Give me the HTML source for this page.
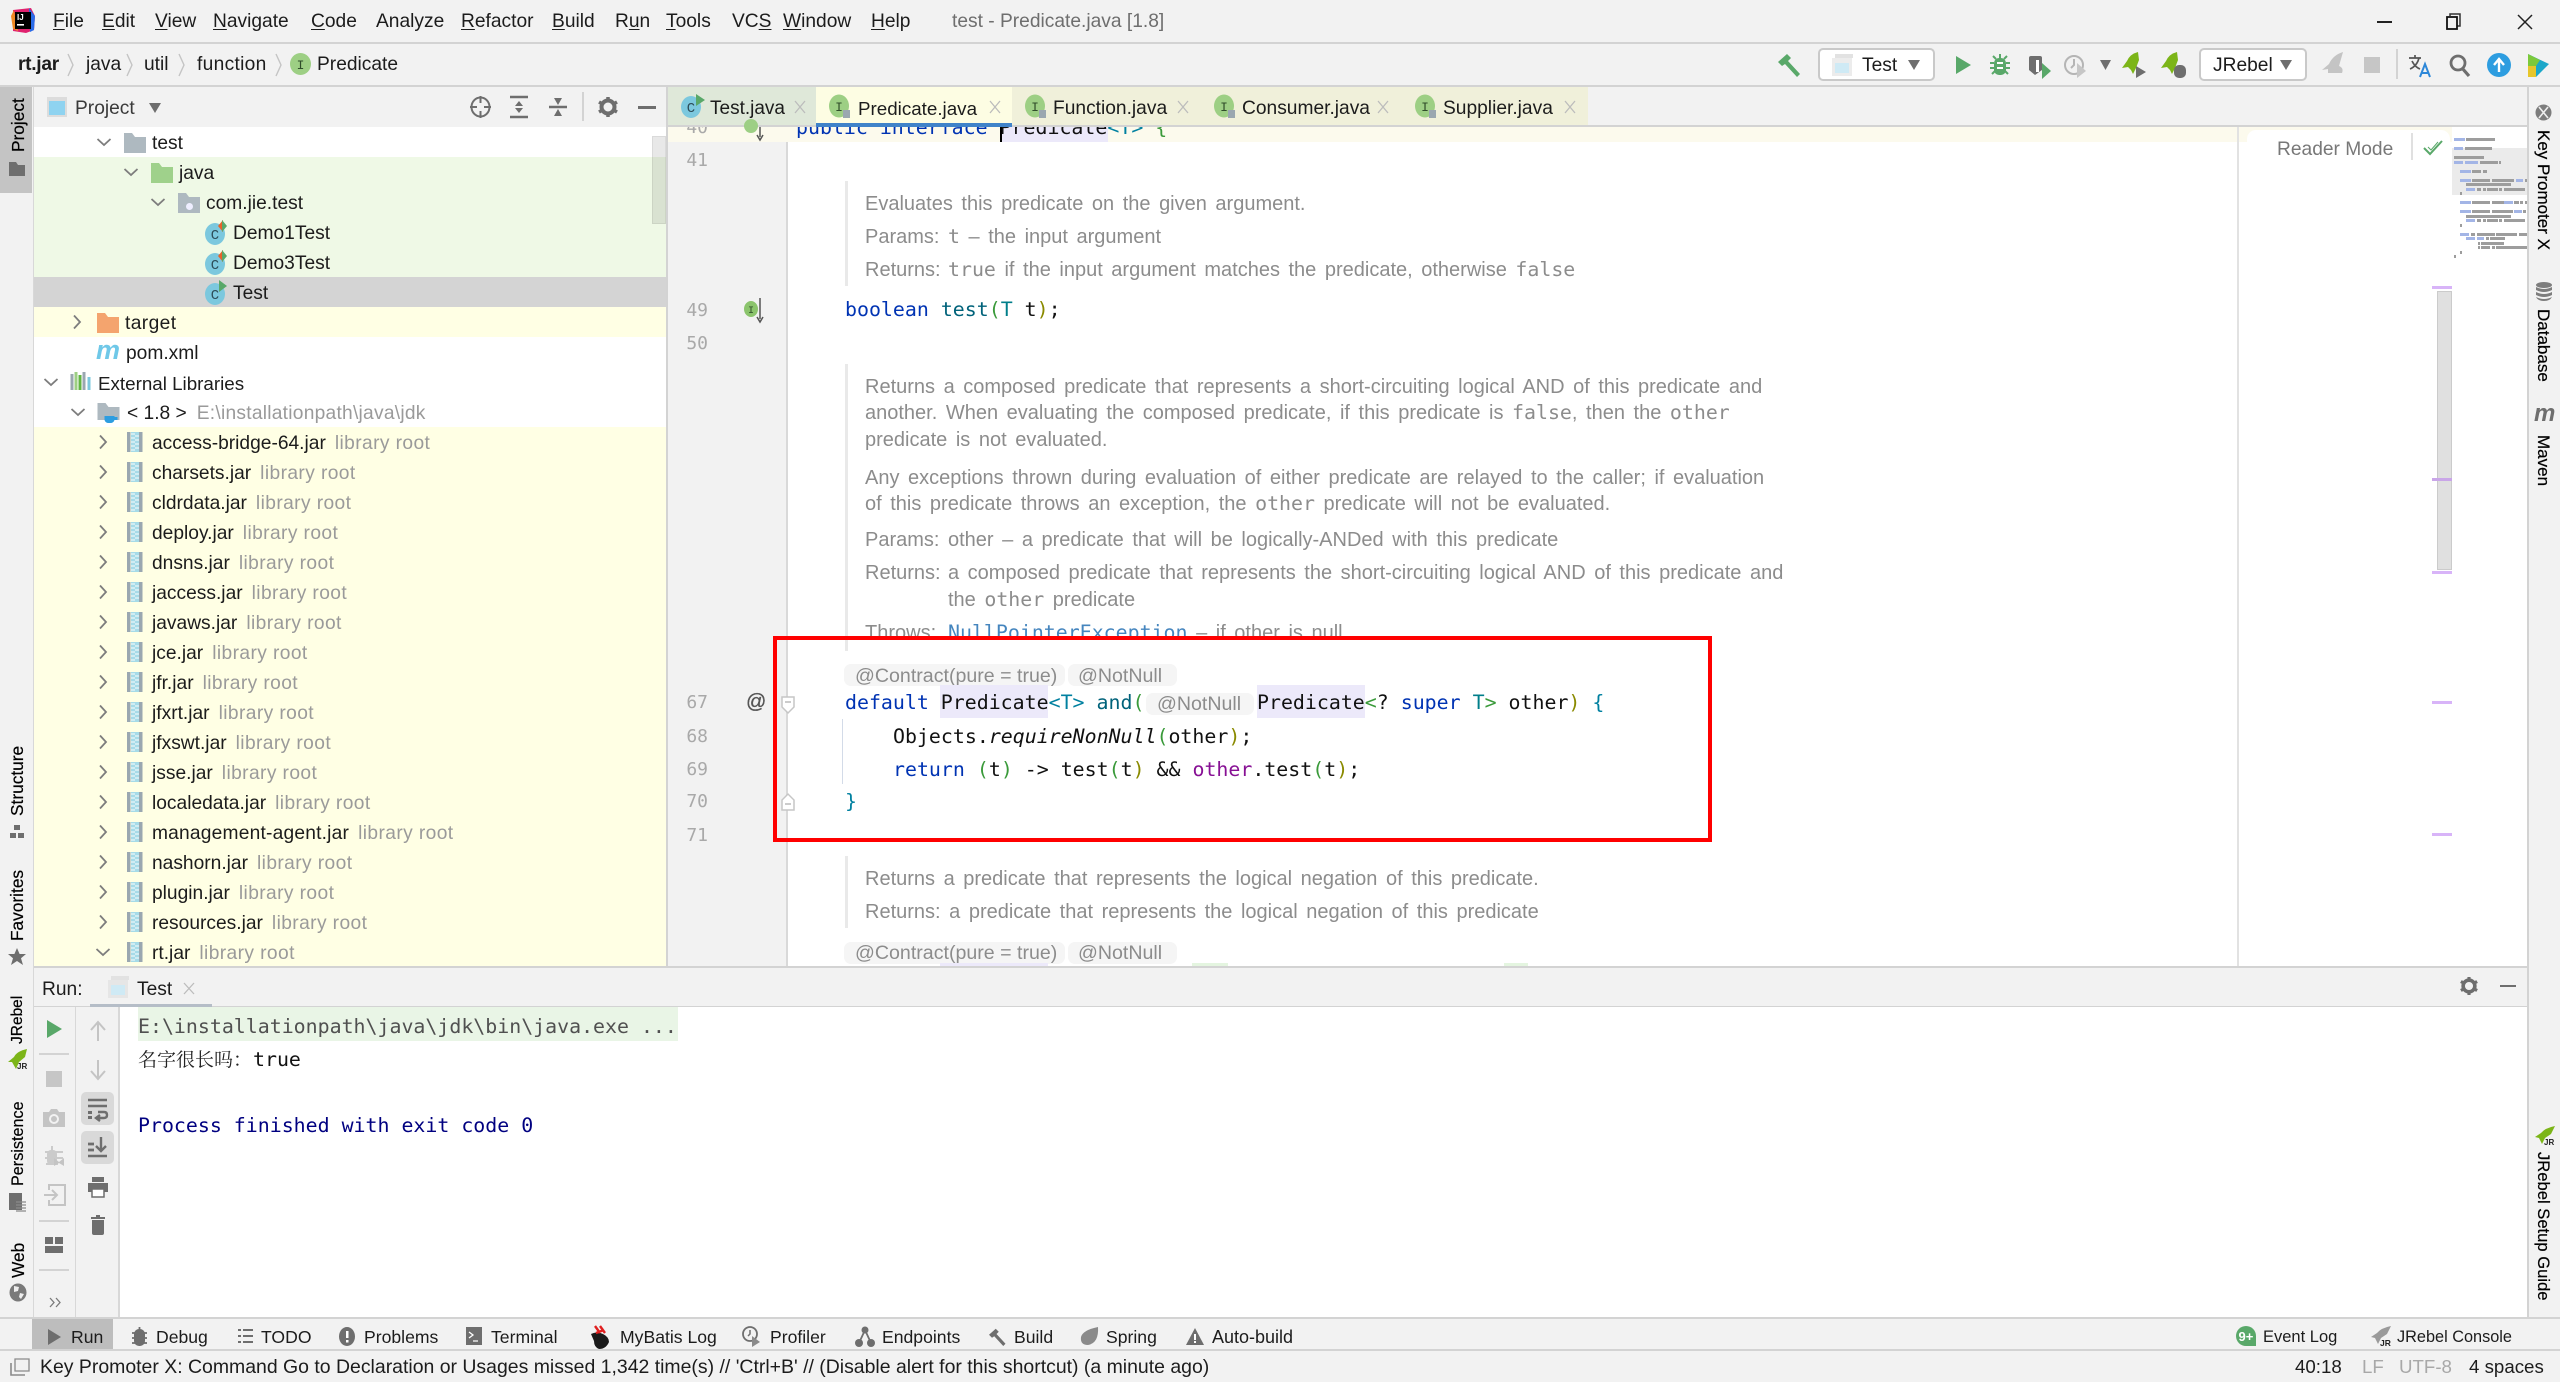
<!DOCTYPE html>
<html lang="en"><head><meta charset="utf-8"><title>test - Predicate.java [1.8]</title>
<style>
html,body{margin:0;padding:0}
body{position:relative;width:2560px;height:1380px;overflow:hidden;background:#f2f2f2;font-family:"Liberation Sans","Noto Sans CJK SC",sans-serif;color:#1c1c1c}
div,span,svg{position:absolute}
i,b,u,em{position:static}
.t{white-space:nowrap;font-size:19.2px;line-height:30px;height:30px}
.b{font-size:17.6px}
.m u{text-decoration:underline;text-underline-offset:2px}
.box{box-sizing:border-box}
svg{overflow:visible}
.r{left:33px;width:633px;height:30px}
.r svg.c{left:62px;top:7px;width:16px;height:16px}
.r svg.j{left:94px;top:5px;width:16px;height:20px}
.r span{left:119px;top:1.5px;white-space:nowrap;font-size:19.2px;line-height:30px}
.r i{font-style:normal;color:#9a9a9a;margin-left:9px;letter-spacing:.4px}
.mono{font-family:"DejaVu Sans Mono","Liberation Mono",monospace;font-size:19.9px;white-space:pre;line-height:30px;height:30px;color:#111}
.ln{font-family:"DejaVu Sans Mono","Liberation Mono",monospace;font-size:18px;color:#a9a9a9;left:676px;width:32px;text-align:right;line-height:30px;height:30px}
.d{white-space:nowrap;font-size:20px;word-spacing:3px;line-height:30px;height:30px;color:#8c8c8c;margin-top:1.5px}
.a{white-space:nowrap;font-size:19.6px;line-height:30px;height:30px;color:#8c8c8c;margin-top:1.5px}
.d em{font-family:"DejaVu Sans Mono","Liberation Mono",monospace;font-size:19.9px;font-style:normal;color:#8c8c8c;line-height:20px}
.bar{left:845px;width:3px;background:#e9e9e9}
.pill{background:#f5f5f5;border-radius:7px;height:22px}
.kw{color:#0033b3}.fn{color:#00627a}.ty{color:#007e8a}.p1{color:#3a9a3a}.p2{color:#8a8a00}.p3{color:#0080a0}.pu{color:#871094}
.mono span{position:static}
.rl{transform:rotate(-90deg);transform-origin:0 0;white-space:nowrap;font-size:17.3px;line-height:20px;color:#000;-webkit-text-stroke:.2px #000}
.rr{transform:rotate(90deg);transform-origin:0 0;white-space:nowrap;font-size:17px;line-height:20px;color:#000;-webkit-text-stroke:.2px #000}
.sep{background:#d6d6d6}
</style></head>
<body>
<svg width="0" height="0" style="left:0;top:0">
<defs>
<symbol id="cr" viewBox="0 0 16 16"><polyline points="5,1.5 11,8 5,14.5" fill="none" stroke="#7d7d7d" stroke-width="1.8"/></symbol>
<symbol id="cd" viewBox="0 0 16 16"><polyline points="1.5,5 8,11 14.5,5" fill="none" stroke="#7d7d7d" stroke-width="1.8"/></symbol>
<symbol id="jar" viewBox="0 0 16 20"><rect x="0" y="0" width="3.5" height="20" fill="#9aa7b0"/><rect x="12" y="0" width="3.5" height="20" fill="#9aa7b0"/><rect x="4" y="0" width="8" height="20" fill="#a6dbe8"/><path d="M4 2h4M8 4h4M4 6h4M8 8h4M4 10h4M8 12h4M4 14h4M8 16h4M4 18h4" stroke="#eaf6f8" stroke-width="1.2"/></symbol>
<symbol id="fold" viewBox="0 0 22 22"><path d="M0 1h8l3 4h11v16H0z"/></symbol>
<symbol id="ci" viewBox="0 0 22 24"><ellipse cx="10" cy="13" rx="10" ry="11" fill="#7cc8de"/><text x="10" y="18" font-family="Liberation Mono" font-size="14" fill="#2d4c58" text-anchor="middle">C</text></symbol>
<symbol id="ii" viewBox="0 0 22 24"><ellipse cx="10" cy="12" rx="10" ry="11.5" fill="#9dcf84"/><text x="10" y="17" font-family="Liberation Mono" font-size="13" fill="#2f4d2a" text-anchor="middle">I</text><rect x="14" y="16" width="7" height="8" fill="#9aa7b0"/></symbol>
<symbol id="run" viewBox="0 0 16 18"><path d="M0 0L15 9 0 18z" fill="#59a869"/></symbol>
</defs>
</svg>

<!-- title bar -->
<svg style="left:11px;top:8px" width="24" height="25" viewBox="0 0 24 25"><path d="M2 2L20 0l4 8-1 14-8 3-13-2z" fill="#e0216e"/><path d="M18 0l6 8-1 14-4 2z" fill="#2a6ce8"/><path d="M0 8L3 2l4 21-5-2z" fill="#f08a24"/><rect x="4" y="4" width="16" height="17" fill="#000"/><text x="6" y="12" font-size="8" font-weight="bold" font-family="Liberation Sans" fill="#fff">IJ</text><rect x="6" y="16" width="7" height="1.6" fill="#fff"/></svg>
<div class="t m" style="left:53px;top:7px"><u>F</u>ile</div>
<div class="t m" style="left:102px;top:7px"><u>E</u>dit</div>
<div class="t m" style="left:155px;top:7px"><u>V</u>iew</div>
<div class="t m" style="left:213px;top:7px"><u>N</u>avigate</div>
<div class="t m" style="left:311px;top:7px"><u>C</u>ode</div>
<div class="t m" style="left:376px;top:7px">Analyze</div>
<div class="t m" style="left:461px;top:7px"><u>R</u>efactor</div>
<div class="t m" style="left:552px;top:7px"><u>B</u>uild</div>
<div class="t m" style="left:615px;top:7px">R<u>u</u>n</div>
<div class="t m" style="left:666px;top:7px"><u>T</u>ools</div>
<div class="t m" style="left:732px;top:7px">VC<u>S</u></div>
<div class="t m" style="left:783px;top:7px"><u>W</u>indow</div>
<div class="t m" style="left:871px;top:7px"><u>H</u>elp</div>
<div class="t" style="left:952px;top:7px;color:#6e6e6e">test - Predicate.java [1.8]</div>
<div style="left:2377px;top:21px;width:15px;height:2px;background:#222"></div>
<svg style="left:2446px;top:13px" width="16" height="17" viewBox="0 0 16 17"><path d="M4 3V1h10v12h-3" fill="none" stroke="#333" stroke-width="1.5"/><rect x="1" y="4" width="10" height="12" fill="none" stroke="#111" stroke-width="1.8"/></svg>
<svg style="left:2517px;top:14px" width="16" height="16" viewBox="0 0 16 16"><path d="M1 1L15 15M15 1L1 15" stroke="#222" stroke-width="1.5"/></svg>
<div style="left:0;top:42px;width:2560px;height:2px;background:#d3d3d3"></div>

<!-- nav bar -->
<div class="t" style="left:18px;top:50px;font-weight:bold;letter-spacing:-.3px">rt.jar</div>
<div class="t" style="left:86px;top:50px">java</div>
<div class="t" style="left:144px;top:50px">util</div>
<div class="t" style="left:197px;top:50px;letter-spacing:.3px">function</div>
<svg style="left:67px;top:53px" width="8" height="24"><polyline points="1,1 6,12 1,23" fill="none" stroke="#c4c4c4" stroke-width="1.4"/></svg>
<svg style="left:126px;top:53px" width="8" height="24"><polyline points="1,1 6,12 1,23" fill="none" stroke="#c4c4c4" stroke-width="1.4"/></svg>
<svg style="left:178px;top:53px" width="8" height="24"><polyline points="1,1 6,12 1,23" fill="none" stroke="#c4c4c4" stroke-width="1.4"/></svg>
<svg style="left:275px;top:53px" width="8" height="24"><polyline points="1,1 6,12 1,23" fill="none" stroke="#c4c4c4" stroke-width="1.4"/></svg>
<svg style="left:290px;top:53px" width="21" height="22" viewBox="0 0 21 22"><ellipse cx="10.5" cy="11" rx="10.5" ry="11" fill="#9dcf84"/><text x="10.5" y="16" font-family="Liberation Mono" font-size="13" fill="#2f4d2a" text-anchor="middle">I</text></svg>
<div class="t" style="left:317px;top:50px">Predicate</div>

<!-- toolbar -->
<svg style="left:1777px;top:53px" width="26" height="24" viewBox="0 0 26 24"><path d="M1 9L10 1l4 4-3 3 12 13-3 3L8 11l-3 2z" fill="#59a869"/></svg>
<div class="box" style="left:1818px;top:48px;width:117px;height:33px;background:#fff;border:2px solid #c9c9c9;border-radius:5px"></div>
<svg style="left:1832px;top:54px" width="22" height="22" viewBox="0 0 22 22"><rect x="3" y="0" width="18" height="4" fill="#e2e2e2"/><rect x="0" y="4" width="20" height="18" fill="#ececec"/><rect x="3" y="9" width="14" height="10" fill="#cfeaf5"/></svg>
<div class="t" style="left:1862px;top:50.5px">Test</div>
<svg style="left:1908px;top:60px" width="12" height="10"><path d="M0 0h12L6 10z" fill="#6e6e6e"/></svg>
<svg style="left:1956px;top:56px" width="16" height="18"><use href="#run"/></svg>
<svg style="left:1990px;top:54px" width="20" height="22" viewBox="0 0 20 22"><path d="M10 0v4M3 2l3 3M17 2l-3 3M0 9h4M16 9h4M0 14h4M16 14h4M2 20l3-3M18 20l-3-3" stroke="#59a869" stroke-width="2"/><rect x="4" y="4" width="12" height="17" rx="5" fill="#59a869"/><path d="M7 9h6M7 14h6" stroke="#fff" stroke-width="2"/></svg>
<svg style="left:2028px;top:55px" width="25" height="24" viewBox="0 0 25 24"><path d="M1 3q0-2 2-2h9q2 0 2 2v12l-7 5-6-5z" fill="#6e6e6e"/><path d="M8 5h3v12H8z" fill="#fff"/><path d="M14 8l9 8-9 8z" fill="#59a869"/></svg>
<svg style="left:2064px;top:54px" width="25" height="24" viewBox="0 0 25 24"><circle cx="10" cy="11" r="9" fill="none" stroke="#b5b5b5" stroke-width="2"/><path d="M10 5v6l-3 3" fill="none" stroke="#b5b5b5" stroke-width="2"/><path d="M13 9l9 8-9 7z" fill="#c6c6c6"/></svg>
<svg style="left:2100px;top:60px" width="11" height="10"><path d="M0 0h11L5.500 10z" fill="#6e6e6e"/></svg>
<svg style="left:2122px;top:52px" width="26" height="26" viewBox="0 0 26 26"><path d="M16 0Q8 2 5 9L0 16l6-1 3 3 2 4 3-6 3-8z" fill="#7cb518"/><path d="M14 14l10 6-10 6z" fill="#6e6e6e"/></svg>
<svg style="left:2161px;top:52px" width="26" height="26" viewBox="0 0 26 26"><path d="M16 0Q8 2 5 9L0 16l6-1 3 3 2 4 3-6 3-8z" fill="#7cb518"/><rect x="13" y="13" width="12" height="13" rx="5" fill="#6e6e6e"/></svg>
<div class="box" style="left:2199px;top:48px;width:108px;height:33px;background:#fff;border:2px solid #c9c9c9;border-radius:5px"></div>
<div class="t" style="left:2213px;top:50.5px">JRebel</div>
<svg style="left:2280px;top:60px" width="12" height="10"><path d="M0 0h12L6 10z" fill="#6e6e6e"/></svg>
<svg style="left:2321px;top:52px" width="24" height="26" viewBox="0 0 24 26"><path d="M22 0Q12 3 8 12L1 18l6-1v4h14q2-5-3-7z" fill="#c4c4c4"/></svg>
<div style="left:2364px;top:57px;width:16px;height:16px;background:#c6c6c6"></div>
<div style="left:2396px;top:49px;width:2px;height:30px;background:#d3d3d3"></div>
<svg style="left:2408px;top:54px" width="24" height="24" viewBox="0 0 24 24"><path d="M1 4h12M7 1v3M11 4q-2 8-9 11M4 7q3 6 8 8" fill="none" stroke="#555" stroke-width="1.7"/><path d="M12 23l5-13 5 13M14 19h6" fill="none" stroke="#2d87d8" stroke-width="2"/></svg>
<svg style="left:2449px;top:54px" width="22" height="23" viewBox="0 0 22 23"><circle cx="9" cy="9" r="7" fill="none" stroke="#6e6e6e" stroke-width="2.800"/><path d="M13 14l7 8" stroke="#6e6e6e" stroke-width="3.200"/></svg>
<svg style="left:2487px;top:53px" width="24" height="24" viewBox="0 0 24 24"><ellipse cx="12" cy="12" rx="12" ry="12" fill="#2d9de0"/><path d="M12 19V8M7 12l5-6 5 6" fill="none" stroke="#fff" stroke-width="2.400"/></svg>
<svg style="left:2528px;top:53px" width="21" height="24" viewBox="0 0 21 24"><path d="M0 1l21 10L8 24H0z" fill="#1ba7c9"/><path d="M0 1l12 6-4 6-8 0z" fill="#7cc93b"/><path d="M0 13h8l0 11H0z" fill="#e7c62b"/></svg>
<div style="left:0;top:85px;width:2560px;height:2px;background:#d3d3d3"></div>

<!-- left stripe -->
<div style="left:0;top:87px;width:33px;height:1231px;background:#f2f2f2"></div>
<div style="left:33px;top:87px;width:1px;height:1231px;background:#d8d8d8"></div>
<div style="left:0;top:87px;width:32px;height:106px;background:#c4c4c4"></div>
<div class="rl" style="left:8px;top:152px">Project</div>
<svg style="left:9px;top:162px" width="16" height="14" viewBox="0 0 16 14"><path d="M0 0h7l2 3h7v11H0z" fill="#6e6e6e"/></svg>
<div class="rl" style="left:7px;top:816px">Structure</div>
<svg style="left:10px;top:825px" width="14" height="14" viewBox="0 0 14 14"><rect x="4" y="0" width="6" height="5" fill="#6e6e6e"/><rect x="0" y="8" width="6" height="5" fill="#6e6e6e"/><rect x="8" y="8" width="6" height="5" fill="#6e6e6e"/></svg>
<div class="rl" style="left:7px;top:941px">Favorites</div>
<svg style="left:8px;top:948px" width="18" height="17" viewBox="0 0 18 17"><path d="M9 0l2.600 6H18l-5 4.200L15 17 9 13l-6 4 2-6.800L0 6h6.400z" fill="#6e6e6e"/></svg>
<div class="rl" style="left:8px;top:1044px;font-size:15.5px">JRebel</div>
<svg style="left:8px;top:1049px" width="20" height="21" viewBox="0 0 20 21"><path d="M19 0Q9 2 6 8L0 13l4 0 4 7 3-7 6-5z" fill="#7cb518"/><text x="9" y="20" font-family="Liberation Sans" font-size="8" font-weight="bold" fill="#222">JR</text></svg>
<div class="rl" style="left:8px;top:1186px;font-size:16.2px">Persistence</div>
<svg style="left:9px;top:1193px" width="17" height="19" viewBox="0 0 17 19"><rect x="0" y="0" width="13" height="17" fill="#6e6e6e"/><path d="M7 9h10M7 12h10M7 15h10M7 18h10" stroke="#8a8a8a" stroke-width="1.300"/></svg>
<div class="rl" style="left:8px;top:1278px">Web</div>
<svg style="left:9px;top:1283px" width="18" height="19" viewBox="0 0 18 19"><ellipse cx="9" cy="9.500" rx="8.500" ry="9" fill="#7a7a7a"/><path d="M5 3l5 1-1 4-4 1zM11 10l4 1-3 5-2-2z" fill="#eee"/></svg>

<!-- project panel -->
<div style="left:34px;top:87px;width:632px;height:40px;background:#f2f2f2"></div>
<svg style="left:47px;top:97px" width="20" height="20" viewBox="0 0 20 20"><rect width="20" height="20" fill="#dcdcdc"/><rect x="2" y="4" width="16" height="14" fill="#8fd3f0"/></svg>
<div class="t" style="left:75px;top:93.5px;color:#3a3a3a">Project</div>
<svg style="left:149px;top:103px" width="12" height="10"><path d="M0 0h12L6 10z" fill="#6e6e6e"/></svg>
<svg style="left:470px;top:96px" width="21" height="22" viewBox="0 0 21 22"><ellipse cx="10.500" cy="11" rx="9" ry="9.500" fill="none" stroke="#6e6e6e" stroke-width="2"/><path d="M10.500 0v7M10.500 15v7M0 11h7M14 11h7" stroke="#6e6e6e" stroke-width="2"/></svg>
<svg style="left:510px;top:96px" width="19" height="22" viewBox="0 0 19 22"><path d="M0 1h18M0 21h18" stroke="#6e6e6e" stroke-width="2.400"/><path d="M9 5l-4 5h8zM9 17l-4-5h8z" fill="#6e6e6e"/></svg>
<svg style="left:549px;top:97px" width="19" height="20" viewBox="0 0 19 20"><path d="M0 10h18" stroke="#6e6e6e" stroke-width="2.400"/><path d="M9 8L5 1h8zM9 12l-4 7h8z" fill="#6e6e6e"/></svg>
<div style="left:582px;top:92px;width:2px;height:29px;background:#d3d3d3"></div>
<svg style="left:598px;top:97px" width="20" height="20" viewBox="0 0 20 20"><circle cx="10" cy="10" r="6.500" fill="none" stroke="#6e6e6e" stroke-width="4"/><path d="M10 0v4M10 16v4M1 5l3.500 2M19 5l-3.500 2M1 15l3.500-2M19 15l-3.500-2" stroke="#6e6e6e" stroke-width="3.500"/></svg>
<div style="left:638px;top:106px;width:18px;height:3px;background:#6e6e6e"></div>

<!-- tree rows bg -->
<div style="left:34px;top:127px;width:632px;height:30px;background:#fff"></div>
<div style="left:34px;top:157px;width:632px;height:120px;background:#eff9e6"></div>
<div style="left:34px;top:277px;width:632px;height:30px;background:#d4d4d4"></div>
<div style="left:34px;top:307px;width:632px;height:30px;background:#ffffe4"></div>
<div style="left:34px;top:337px;width:632px;height:90px;background:#fff"></div>
<div style="left:34px;top:427px;width:632px;height:539px;background:#ffffe4"></div>
<div style="left:652px;top:136px;width:14px;height:88px;background:rgba(0,0,0,.09);border:1px solid rgba(0,0,0,.06);box-sizing:border-box"></div>

<div class="r" style="top:127px"><svg class="c" style="left:63px"><use href="#cd"/></svg><svg style="left:91px;top:5px" width="22" height="22" fill="#aeb9c0"><use href="#fold"/></svg><span style="left:119px">test</span></div>
<div class="r" style="top:157px"><svg class="c" style="left:90px"><use href="#cd"/></svg><svg style="left:118px;top:5px" width="22" height="22" fill="#9fd18b"><use href="#fold"/></svg><span style="left:146px">java</span></div>
<div class="r" style="top:187px"><svg class="c" style="left:117px"><use href="#cd"/></svg><svg style="left:145px;top:5px" width="22" height="22" fill="#aeb9c0"><use href="#fold"/></svg><div style="left:153px;top:16px;width:7px;height:7px;border-radius:50%;background:#eef"></div><span style="left:173px">com.jie.test</span></div>
<div class="r" style="top:217px"><svg style="left:172px;top:4px" width="22" height="24"><use href="#ci"/></svg><svg style="left:184px;top:3px" width="10" height="12"><path d="M1 6L6 0v12z" fill="#e8622a"/><path d="M5 0l5 6-5 6z" fill="#59a869"/></svg><span style="left:200px">Demo1Test</span></div>
<div class="r" style="top:247px"><svg style="left:172px;top:4px" width="22" height="24"><use href="#ci"/></svg><svg style="left:184px;top:3px" width="10" height="12"><path d="M1 6L6 0v12z" fill="#e8622a"/><path d="M5 0l5 6-5 6z" fill="#59a869"/></svg><span style="left:200px">Demo3Test</span></div>
<div class="r" style="top:277px"><svg style="left:172px;top:4px" width="22" height="24"><use href="#ci"/></svg><svg style="left:186px;top:3px" width="8" height="12"><path d="M0 0l8 6-8 6z" fill="#59a869"/></svg><span style="left:200px">Test</span></div>
<div class="r" style="top:307px"><svg class="c" style="left:36px"><use href="#cr"/></svg><svg style="left:64px;top:5px" width="22" height="22" fill="#f4a46e"><use href="#fold"/></svg><span style="left:92px;letter-spacing:.4px">target</span></div>
<div class="r" style="top:337px"><svg style="left:63px;top:6px" width="24" height="18" viewBox="0 0 24 18"><text x="0" y="16" font-family="Liberation Sans" font-style="italic" font-weight="bold" font-size="27" fill="#6fc8e8">m</text></svg><span style="left:93px">pom.xml</span></div>
<div class="r" style="top:367px"><svg class="c" style="left:10px"><use href="#cd"/></svg><svg style="left:37px;top:5px" width="22" height="20" viewBox="0 0 22 20"><path d="M2 2v16" stroke="#9aa7b0" stroke-width="3"/><path d="M6 0v18" stroke="#9dcf84" stroke-width="3"/><path d="M10 3v15" stroke="#62b543" stroke-width="3"/><path d="M14 0v18" stroke="#9aa7b0" stroke-width="3"/><path d="M19 5v13" stroke="#7cc8de" stroke-width="3"/></svg><span style="left:65px;font-size:18.8px">External Libraries</span></div>
<div class="r" style="top:397px"><svg class="c" style="left:37px"><use href="#cd"/></svg><svg style="left:64px;top:5px" width="23" height="22" viewBox="0 0 22 22"><path d="M0 1h8l3 4h11v13H0z" fill="#aeb9c0"/><path d="M7 14h10v4q-1 3-4 3h-2q-3 0-4-3zM17 15h3v3h-3z" fill="#2d9de0"/></svg><span style="left:94px">&lt; 1.8 &gt;<i style="margin-left:10px;letter-spacing:.25px">E:\installationpath\java\jdk</i></span></div>

<div class="r" style="top:427px"><svg class="c"><use href="#cr"/></svg><svg class="j"><use href="#jar"/></svg><span>access-bridge-64.jar<i>library root</i></span></div>
<div class="r" style="top:457px"><svg class="c"><use href="#cr"/></svg><svg class="j"><use href="#jar"/></svg><span>charsets.jar<i>library root</i></span></div>
<div class="r" style="top:487px"><svg class="c"><use href="#cr"/></svg><svg class="j"><use href="#jar"/></svg><span>cldrdata.jar<i>library root</i></span></div>
<div class="r" style="top:517px"><svg class="c"><use href="#cr"/></svg><svg class="j"><use href="#jar"/></svg><span>deploy.jar<i>library root</i></span></div>
<div class="r" style="top:547px"><svg class="c"><use href="#cr"/></svg><svg class="j"><use href="#jar"/></svg><span>dnsns.jar<i>library root</i></span></div>
<div class="r" style="top:577px"><svg class="c"><use href="#cr"/></svg><svg class="j"><use href="#jar"/></svg><span>jaccess.jar<i>library root</i></span></div>
<div class="r" style="top:607px"><svg class="c"><use href="#cr"/></svg><svg class="j"><use href="#jar"/></svg><span>javaws.jar<i>library root</i></span></div>
<div class="r" style="top:637px"><svg class="c"><use href="#cr"/></svg><svg class="j"><use href="#jar"/></svg><span>jce.jar<i>library root</i></span></div>
<div class="r" style="top:667px"><svg class="c"><use href="#cr"/></svg><svg class="j"><use href="#jar"/></svg><span>jfr.jar<i>library root</i></span></div>
<div class="r" style="top:697px"><svg class="c"><use href="#cr"/></svg><svg class="j"><use href="#jar"/></svg><span>jfxrt.jar<i>library root</i></span></div>
<div class="r" style="top:727px"><svg class="c"><use href="#cr"/></svg><svg class="j"><use href="#jar"/></svg><span>jfxswt.jar<i>library root</i></span></div>
<div class="r" style="top:757px"><svg class="c"><use href="#cr"/></svg><svg class="j"><use href="#jar"/></svg><span>jsse.jar<i>library root</i></span></div>
<div class="r" style="top:787px"><svg class="c"><use href="#cr"/></svg><svg class="j"><use href="#jar"/></svg><span>localedata.jar<i>library root</i></span></div>
<div class="r" style="top:817px"><svg class="c"><use href="#cr"/></svg><svg class="j"><use href="#jar"/></svg><span style="letter-spacing:.2px">management-agent.jar<i>library root</i></span></div>
<div class="r" style="top:847px"><svg class="c"><use href="#cr"/></svg><svg class="j"><use href="#jar"/></svg><span>nashorn.jar<i>library root</i></span></div>
<div class="r" style="top:877px"><svg class="c"><use href="#cr"/></svg><svg class="j"><use href="#jar"/></svg><span>plugin.jar<i>library root</i></span></div>
<div class="r" style="top:907px"><svg class="c"><use href="#cr"/></svg><svg class="j"><use href="#jar"/></svg><span>resources.jar<i>library root</i></span></div>
<div class="r" style="top:937px;height:29px;overflow:hidden"><svg class="c"><use href="#cd"/></svg><svg class="j"><use href="#jar"/></svg><span>rt.jar<i>library root</i></span></div>
<div style="left:666px;top:87px;width:2px;height:880px;background:#d3d3d3"></div>

<!-- tabs -->
<div style="left:668px;top:87px;width:148px;height:40px;background:#dfe8d9"></div>
<div style="left:816px;top:87px;width:196px;height:40px;background:#fdfde3"></div>
<div style="left:1012px;top:87px;width:576px;height:40px;background:#f0f0da"></div>
<div style="left:668px;top:125px;width:1860px;height:2px;background:#d3d3d3"></div>
<div style="left:816px;top:123px;width:196px;height:4px;background:#4083c9"></div>
<svg style="left:681px;top:94px" width="22" height="24"><use href="#ci"/></svg><svg style="left:696px;top:94px" width="9" height="12"><path d="M0 0l9 6-9 6z" fill="#59a869"/></svg>
<div class="t" style="left:710px;top:93.5px;font-size:19px">Test.java</div>
<svg style="left:794px;top:100px" width="12" height="14"><path d="M1 1l10 12M11 1L1 13" stroke="#bcbcbc" stroke-width="1.300"/></svg>
<svg style="left:829px;top:94px" width="22" height="24"><use href="#ii"/></svg>
<div class="t" style="left:858px;top:93.5px;font-size:18.8px">Predicate.java</div>
<svg style="left:989px;top:100px" width="12" height="14"><path d="M1 1l10 12M11 1L1 13" stroke="#bcbcbc" stroke-width="1.300"/></svg>
<svg style="left:1025px;top:94px" width="22" height="24"><use href="#ii"/></svg>
<div class="t" style="left:1053px;top:93.5px">Function.java</div>
<svg style="left:1177px;top:100px" width="12" height="14"><path d="M1 1l10 12M11 1L1 13" stroke="#bcbcbc" stroke-width="1.300"/></svg>
<svg style="left:1214px;top:94px" width="22" height="24"><use href="#ii"/></svg>
<div class="t" style="left:1242px;top:93.5px">Consumer.java</div>
<svg style="left:1377px;top:100px" width="12" height="14"><path d="M1 1l10 12M11 1L1 13" stroke="#bcbcbc" stroke-width="1.300"/></svg>
<svg style="left:1415px;top:94px" width="22" height="24"><use href="#ii"/></svg>
<div class="t" style="left:1443px;top:93.5px">Supplier.java</div>
<svg style="left:1564px;top:100px" width="12" height="14"><path d="M1 1l10 12M11 1L1 13" stroke="#bcbcbc" stroke-width="1.300"/></svg>

<!-- editor -->
<div style="left:668px;top:127px;width:119px;height:839px;background:#f2f2f2"></div>
<div style="left:787px;top:127px;width:1741px;height:839px;background:#fff"></div>
<div style="left:786px;top:127px;width:2px;height:839px;background:#d9d9d9"></div>
<div style="left:668px;top:127px;width:1784px;height:15px;background:#fcfaed"></div>
<div style="left:2237px;top:127px;width:2px;height:839px;background:#e2e2e2"></div>

<div style="left:668px;top:127px;width:1200px;height:15px;overflow:hidden">
<div class="ln" style="left:8px;top:-14px">40</div>
<div style="left:332px;top:0;width:108px;height:15px;background:#ece9fa"></div>
<div class="mono" style="left:128px;top:-14px"><span class="kw">public interface</span> Predicate<span class="p3">&lt;T&gt;</span> <span class="p1">{</span></div>
<div style="left:332px;top:0;width:2px;height:15px;background:#000"></div>
</div>
<svg style="left:743px;top:127px" width="22" height="15"><ellipse cx="8" cy="-1" rx="7" ry="7" fill="#9dcf84"/><path d="M17 0v10M14 8l3 5 3-5" fill="none" stroke="#555" stroke-width="1.500"/></svg>
<div class="ln" style="top:146px">41</div>
<div class="ln" style="top:296px">49</div>
<div class="ln" style="top:329px">50</div>
<svg style="left:744px;top:298px" width="22" height="26" viewBox="0 0 22 26"><ellipse cx="7" cy="11" rx="7" ry="8" fill="#8bc46c"/><text x="7" y="15" font-family="Liberation Mono" font-size="10" fill="#2f4d2a" text-anchor="middle">I</text><path d="M16 0v21M13 19l3 5 3-5" fill="none" stroke="#555" stroke-width="1.500"/></svg>

<div class="bar" style="top:181px;height:105px"></div>
<div class="d" style="left:865px;top:187px">Evaluates this predicate on the given argument.</div>
<div class="d" style="left:865px;top:220px">Params:</div><div class="d" style="left:948px;top:220px"><em>t</em> – the input argument</div>
<div class="d" style="left:865px;top:253px">Returns:</div><div class="d" style="left:948px;top:253px"><em>true</em> if the input argument matches the predicate, otherwise <em>false</em></div>

<div class="mono" style="left:845px;top:295px"><span class="kw">boolean</span> <span class="fn">test</span><span class="p1">(</span><span class="ty">T</span> t<span class="p2">)</span>;</div>

<div class="bar" style="top:364px;height:287px"></div>
<div class="d" style="left:865px;top:370px">Returns a composed predicate that represents a short-circuiting logical AND of this predicate and</div>
<div class="d" style="left:865px;top:396px">another. When evaluating the composed predicate, if this predicate is <em>false</em>, then the <em>other</em></div>
<div class="d" style="left:865px;top:423px">predicate is not evaluated.</div>
<div class="d" style="left:865px;top:461px">Any exceptions thrown during evaluation of either predicate are relayed to the caller; if evaluation</div>
<div class="d" style="left:865px;top:487px">of this predicate throws an exception, the <em>other</em> predicate will not be evaluated.</div>
<div class="d" style="left:865px;top:523px">Params:</div><div class="d" style="left:948px;top:523px">other – a predicate that will be logically-ANDed with this predicate</div>
<div class="d" style="left:865px;top:556px">Returns:</div><div class="d" style="left:948px;top:556px">a composed predicate that represents the short-circuiting logical AND of this predicate and</div>
<div class="d" style="left:948px;top:583px">the <em>other</em> predicate</div>
<div style="left:865px;top:616px;width:700px;height:20px;overflow:hidden"><div class="d" style="left:0;top:0">Throws:</div><div class="d" style="left:83px;top:0"><em style="color:#4585be">NullPointerException</em> – if other is null</div></div>

<div class="pill" style="left:844px;top:664px;width:221px"></div>
<div class="pill" style="left:1068px;top:664px;width:109px"></div>
<div class="a" style="left:855px;top:659px">@Contract(pure = true)</div>
<div class="a" style="left:1078px;top:659px">@NotNull</div>

<div class="ln" style="top:688px">67</div>
<div class="t" style="left:746px;top:687px;color:#555;font-size:20px;-webkit-text-stroke:.3px #555">@</div>
<svg style="left:781px;top:696px" width="14" height="18" viewBox="0 0 14 18"><path d="M1 1h12v10l-6 6-6-6z" fill="#fff" stroke="#c6c6c6" stroke-width="1.500"/><path d="M4 6h6" stroke="#bbb" stroke-width="1.500"/></svg>
<div style="left:940px;top:685px;width:108px;height:33px;background:#ece9fa"></div>
<div style="left:1257px;top:685px;width:108px;height:33px;background:#ece9fa"></div>
<div class="pill" style="left:1146px;top:693px;width:108px"></div>
<div class="a" style="left:1157px;top:687px">@NotNull</div>
<div class="mono" style="left:845px;top:688px"><span class="kw">default</span> Predicate<span class="p3">&lt;T&gt;</span> <span class="fn">and</span><span class="p1">(</span></div>
<div class="mono" style="left:1257px;top:688px">Predicate<span class="p1">&lt;</span>? <span class="kw">super</span> <span class="ty">T</span><span class="p1">&gt;</span> other<span class="p2">)</span> <span class="p3">{</span></div>
<div style="left:842px;top:719px;width:1px;height:65px;background:#d3dbe8"></div>
<div class="ln" style="top:722px">68</div>
<div class="mono" style="left:893px;top:722px">Objects.<span style="font-style:italic">requireNonNull</span><span class="p1">(</span>other<span class="p2">)</span>;</div>
<div class="ln" style="top:755px">69</div>
<div class="mono" style="left:893px;top:755px"><span class="kw">return</span> <span class="p1">(</span>t<span class="p1">)</span> -&gt; test<span class="p1">(</span>t<span class="p2">)</span> &amp;&amp; <span class="pu">other</span>.test<span class="p1">(</span>t<span class="p2">)</span>;</div>
<div class="ln" style="top:787px">70</div>
<svg style="left:781px;top:793px" width="14" height="18" viewBox="0 0 14 18"><path d="M1 17h12V7L7 1 1 7z" fill="#fff" stroke="#c6c6c6" stroke-width="1.500"/><path d="M4 11h6" stroke="#bbb" stroke-width="1.500"/></svg>
<div class="mono" style="left:845px;top:787px"><span class="p3">}</span></div>
<div class="ln" style="top:821px">71</div>

<div class="bar" style="top:856px;height:72px"></div>
<div class="d" style="left:865px;top:862px">Returns a predicate that represents the logical negation of this predicate.</div>
<div class="d" style="left:865px;top:895px">Returns: a predicate that represents the logical negation of this predicate</div>
<div class="pill" style="left:844px;top:942px;width:221px"></div>
<div class="pill" style="left:1068px;top:942px;width:109px"></div>
<div class="a" style="left:855px;top:936px">@Contract(pure = true)</div>
<div class="a" style="left:1078px;top:936px">@NotNull</div>
<div style="left:940px;top:963px;width:108px;height:3px;background:#ece9fa"></div>
<div style="left:1192px;top:963px;width:36px;height:3px;background:#e4f5e0"></div>
<div style="left:1504px;top:963px;width:24px;height:3px;background:#e4f5e0"></div>

<!-- red box -->
<div class="box" style="left:773px;top:636px;width:939px;height:206px;border:4.500px solid #f00"></div>

<!-- reader mode -->
<div style="left:2247px;top:130px;width:203px;height:40px;background:#fff;border-radius:9px 9px 0 0"></div>
<div class="t" style="left:2277px;top:134.5px;color:#787878">Reader Mode</div>
<div style="left:2411px;top:133px;width:2px;height:27px;background:#e0e0e0"></div>
<svg style="left:2423px;top:140px" width="20" height="15" viewBox="0 0 20 15"><path d="M1 8l6 6L19 1" fill="none" stroke="#59a869" stroke-width="2"/><path d="M5 7l3 3L15 2" fill="none" stroke="#59a869" stroke-width="1"/></svg>

<!-- minimap -->
<div style="left:2452px;top:148px;width:76px;height:47px;background:#ebebeb"></div>
<svg style="left:2200px;top:110px" width="328" height="500" viewBox="0 0 984 1500">
<g fill="#a3b5e6"><rect x="762" y="84" width="33" height="9"/><rect x="762" y="111" width="27" height="9"/><rect x="762" y="153" width="27" height="9"/><rect x="795" y="153" width="39" height="9"/><rect x="780" y="180" width="33" height="9"/><rect x="780" y="207" width="33" height="9"/><rect x="948" y="207" width="21" height="9"/><rect x="798" y="234" width="27" height="9"/><rect x="780" y="273" width="33" height="9"/><rect x="912" y="273" width="27" height="9"/><rect x="780" y="300" width="33" height="9"/><rect x="942" y="300" width="24" height="9"/><rect x="798" y="327" width="27" height="9"/><rect x="780" y="369" width="27" height="9"/><rect x="798" y="381" width="27" height="9"/><rect x="831" y="381" width="21" height="9"/></g>
<g fill="#9d9d9d"><rect x="798" y="84" width="87" height="9"/><rect x="795" y="111" width="81" height="9"/><rect x="762" y="138" width="90" height="9"/><rect x="840" y="153" width="54" height="9"/><rect x="897" y="153" width="6" height="9"/><rect x="816" y="180" width="27" height="9"/><rect x="849" y="180" width="12" height="9"/><rect x="816" y="207" width="54" height="9"/><rect x="876" y="207" width="66" height="9"/><rect x="975" y="207" width="9" height="9"/><rect x="798" y="219" width="135" height="9"/><rect x="831" y="234" width="12" height="9"/><rect x="849" y="234" width="9" height="9"/><rect x="861" y="234" width="33" height="9"/><rect x="897" y="234" width="9" height="9"/><rect x="912" y="234" width="63" height="9"/><rect x="780" y="246" width="6" height="9"/><rect x="816" y="273" width="54" height="9"/><rect x="876" y="273" width="36" height="9"/><rect x="942" y="273" width="15" height="9"/><rect x="960" y="273" width="9" height="9"/><rect x="975" y="273" width="9" height="9"/><rect x="816" y="300" width="54" height="9"/><rect x="876" y="300" width="63" height="9"/><rect x="969" y="300" width="9" height="9"/><rect x="798" y="315" width="135" height="9"/><rect x="831" y="327" width="12" height="9"/><rect x="849" y="327" width="9" height="9"/><rect x="861" y="327" width="33" height="9"/><rect x="897" y="327" width="9" height="9"/><rect x="912" y="327" width="63" height="9"/><rect x="780" y="342" width="6" height="9"/><rect x="813" y="369" width="12" height="9"/><rect x="831" y="369" width="54" height="9"/><rect x="888" y="369" width="63" height="9"/><rect x="957" y="369" width="27" height="9"/><rect x="858" y="381" width="9" height="9"/><rect x="870" y="381" width="45" height="9"/><rect x="834" y="396" width="6" height="9"/><rect x="843" y="396" width="69" height="9"/><rect x="834" y="408" width="6" height="9"/><rect x="843" y="408" width="27" height="9"/><rect x="876" y="408" width="9" height="9"/><rect x="888" y="408" width="96" height="9"/><rect x="780" y="423" width="6" height="9"/><rect x="762" y="435" width="6" height="9"/></g>
</svg>

<!-- scrollbar -->
<div class="box" style="left:2437px;top:291px;width:15px;height:279px;background:#e0e0e0;border:1px solid #cbcbcb"></div>
<div style="left:2432px;top:286px;width:20px;height:3px;background:#d8b4f8"></div>
<div style="left:2432px;top:478px;width:20px;height:3px;background:#c9a6e8"></div>
<div style="left:2432px;top:571px;width:20px;height:3px;background:#d8b4f8"></div>
<div style="left:2432px;top:701px;width:20px;height:3px;background:#d8b4f8"></div>
<div style="left:2432px;top:833px;width:20px;height:3px;background:#d8b4f8"></div>

<!-- right stripe -->
<div style="left:2528px;top:87px;width:32px;height:1231px;background:#f2f2f2"></div>
<div style="left:2527px;top:87px;width:2px;height:1231px;background:#d3d3d3"></div>
<svg style="left:2535px;top:104px" width="17" height="17" viewBox="0 0 17 17"><circle cx="8.500" cy="8.500" r="8" fill="#7d7d7d"/><path d="M4 3l9 11M13 3L4 14" stroke="#eee" stroke-width="1.600"/></svg>
<div class="rr" style="left:2553px;top:130px">Key Promoter X</div>
<svg style="left:2536px;top:282px" width="16" height="19" viewBox="0 0 16 19"><ellipse cx="8" cy="3" rx="8" ry="3" fill="#7d7d7d"/><path d="M0 5q8 4 16 0v3q-8 4-16 0zM0 10q8 4 16 0v3q-8 4-16 0zM0 15q8 4 16 0q-2 4-8 4t-8-4z" fill="#7d7d7d"/></svg>
<div class="rr" style="left:2553px;top:309px">Database</div>
<svg style="left:2534px;top:407px" width="20" height="18" viewBox="0 0 20 18"><text x="0" y="14" font-family="Liberation Sans" font-style="italic" font-weight="bold" font-size="24" fill="#6e6e6e">m</text></svg>
<div class="rr" style="left:2553px;top:435px">Maven</div>
<svg style="left:2535px;top:1126px" width="20" height="20" viewBox="0 0 20 20"><path d="M20 0Q10 2 6 7L0 11l4 1 3 6 3-6 6-4z" fill="#7cb518"/><text x="9" y="19" font-family="Liberation Sans" font-size="8" font-weight="bold" fill="#222">JR</text></svg>
<div class="rr" style="left:2553px;top:1152px;font-size:16.6px">JRebel Setup Guide</div>

<!-- run panel -->
<div style="left:34px;top:966px;width:2494px;height:2px;background:#d3d3d3"></div>
<div style="left:34px;top:968px;width:2493px;height:39px;background:#f2f2f2"></div>
<div style="left:34px;top:1006px;width:2493px;height:1px;background:#d3d3d3"></div>
<div class="t" style="left:42px;top:974.5px">Run:</div>
<svg style="left:108px;top:976px" width="22" height="22" viewBox="0 0 22 22"><rect x="3" y="0" width="18" height="4" fill="#e2e2e2"/><rect x="0" y="4" width="20" height="18" fill="#e6e6e6"/><rect x="3" y="9" width="14" height="10" fill="#cfeaf5"/></svg>
<div class="t" style="left:137px;top:974.5px">Test</div>
<svg style="left:183px;top:982px" width="12" height="13"><path d="M1 1l10 11M11 1L1 12" stroke="#bcbcbc" stroke-width="1.300"/></svg>
<div style="left:90px;top:1004px;width:122px;height:3px;background:#b5bdc7"></div>
<svg style="left:2460px;top:977px" width="18" height="18" viewBox="0 0 20 20"><circle cx="10" cy="10" r="6.500" fill="none" stroke="#6e6e6e" stroke-width="4"/><path d="M10 0v4M10 16v4M1 5l3.500 2M19 5l-3.500 2M1 15l3.500-2M19 15l-3.500-2" stroke="#6e6e6e" stroke-width="3.500"/></svg>
<div style="left:2500px;top:985px;width:16px;height:2px;background:#6e6e6e"></div>

<div style="left:34px;top:1007px;width:84px;height:311px;background:#f2f2f2"></div>
<div style="left:75px;top:1007px;width:1px;height:311px;background:#d8d8d8"></div>
<div style="left:118px;top:1007px;width:2px;height:311px;background:#d8d8d8"></div>
<div style="left:120px;top:1007px;width:2407px;height:311px;background:#fff"></div>

<svg style="left:47px;top:1020px" width="16" height="18"><use href="#run"/></svg>
<div style="left:39px;top:1053px;width:30px;height:2px;background:#d3d3d3"></div>
<div style="left:46px;top:1071px;width:16px;height:16px;background:#c6c6c6"></div>
<svg style="left:43px;top:1109px" width="22" height="18" viewBox="0 0 22 18"><path d="M0 3h6l2-3h6l2 3h6v15H0z" fill="#c4c4c4"/><circle cx="11" cy="10" r="4" fill="none" stroke="#f2f2f2" stroke-width="2"/></svg>
<svg style="left:44px;top:1146px" width="22" height="22" viewBox="0 0 22 22"><rect x="3" y="4" width="10" height="15" rx="4" fill="#cbcbcb"/><path d="M8 0v4M1 6h18M1 12h18M2 18h12" stroke="#cbcbcb" stroke-width="2"/><path d="M10 12l5 4 5-4v8l-5-3-5 3z" fill="#c4c4c4"/></svg>
<svg style="left:44px;top:1184px" width="22" height="22" viewBox="0 0 22 22"><path d="M5 6V1h16v20H5v-5" fill="none" stroke="#c4c4c4" stroke-width="2"/><path d="M0 11h12M8 6l5 5-5 5" fill="none" stroke="#c4c4c4" stroke-width="2"/></svg>
<div style="left:39px;top:1220px;width:30px;height:2px;background:#d3d3d3"></div>
<svg style="left:45px;top:1237px" width="18" height="16" viewBox="0 0 18 16"><rect x="0" y="0" width="8" height="7" fill="#6e6e6e"/><rect x="10" y="0" width="8" height="7" fill="#6e6e6e"/><rect x="0" y="9" width="18" height="7" fill="#6e6e6e"/></svg>
<div style="left:39px;top:1269px;width:30px;height:2px;background:#d3d3d3"></div>
<svg style="left:49px;top:1297px" width="12" height="11"><path d="M1 1l4 4.500-4 4.500M7 1l4 4.500-4 4.500" fill="none" stroke="#7a7a7a" stroke-width="1.300"/></svg>

<svg style="left:90px;top:1021px" width="16" height="20" viewBox="0 0 16 20"><path d="M8 20V2M1 9l7-8 7 8" fill="none" stroke="#c4c4c4" stroke-width="2"/></svg>
<svg style="left:90px;top:1060px" width="16" height="20" viewBox="0 0 16 20"><path d="M8 0v18M1 11l7 8 7-8" fill="none" stroke="#c4c4c4" stroke-width="2"/></svg>
<div style="left:81px;top:1092px;width:33px;height:33px;background:#d9d9d9;border-radius:5px"></div>
<svg style="left:88px;top:1099px" width="20" height="20" viewBox="0 0 20 20"><path d="M0 1h19M0 7h19" stroke="#6e6e6e" stroke-width="2.400"/><path d="M10 13h6q3 0 3 3t-3 3h-6M12 16l-4 3 4 3" fill="none" stroke="#6e6e6e" stroke-width="2.400"/><rect x="0" y="12" width="4" height="3" fill="#6e6e6e"/><rect x="0" y="17" width="4" height="3" fill="#6e6e6e"/></svg>
<div style="left:81px;top:1131px;width:33px;height:33px;background:#d9d9d9;border-radius:5px"></div>
<svg style="left:88px;top:1137px" width="20" height="20" viewBox="0 0 20 20"><path d="M0 19h19" stroke="#6e6e6e" stroke-width="2.400"/><path d="M0 7h6M0 13h6" stroke="#6e6e6e" stroke-width="2.800"/><path d="M13 0v13M8 9l5 5 5-5" fill="none" stroke="#6e6e6e" stroke-width="2.400"/></svg>
<svg style="left:88px;top:1177px" width="20" height="20" viewBox="0 0 20 20"><rect x="4" y="0" width="12" height="5" fill="#6e6e6e"/><rect x="0" y="6" width="20" height="9" fill="#6e6e6e"/><rect x="4" y="12" width="12" height="8" fill="#fff" stroke="#6e6e6e" stroke-width="1.500"/></svg>
<svg style="left:91px;top:1215px" width="14" height="20" viewBox="0 0 14 20"><path d="M0 3h14M5 1h4" stroke="#6e6e6e" stroke-width="2"/><path d="M1 5h12v13q0 2-2 2H3q-2 0-2-2z" fill="#6e6e6e"/></svg>

<!-- console -->
<div style="left:138px;top:1007px;width:540px;height:34px;background:#e9f5e6"></div>
<div class="mono" style="left:138px;top:1011.5px;color:#505050">E:\installationpath\java\jdk\bin\java.exe ...</div>
<div class="t" style="left:138px;top:1044px;font-family:'Noto Serif CJK SC','Liberation Serif',serif;font-size:19px;color:#222">名字很长吗：</div>
<div class="mono" style="left:253px;top:1044.5px">true</div>
<div class="mono" style="left:138px;top:1110.5px;color:#000080">Process finished with exit code 0</div>

<!-- bottom tool bar -->
<div style="left:0;top:1318px;width:2560px;height:32px;background:#f2f2f2"></div>
<div style="left:0;top:1317px;width:2560px;height:2px;background:#d3d3d3"></div>
<div style="left:32px;top:1319px;width:81px;height:31px;background:#bdbdbd"></div>
<svg style="left:48px;top:1329px" width="13" height="16"><path d="M0 0l13 8-13 8z" fill="#6e6e6e"/></svg>
<div class="t b" style="left:71px;top:1322px">Run</div>
<svg style="left:132px;top:1327px" width="15" height="19" viewBox="0 0 15 19"><rect x="2" y="2" width="11" height="17" rx="5" fill="#6e6e6e"/><path d="M0 6h15M0 11h15M0 16h15M7.500 0v3" stroke="#6e6e6e" stroke-width="1.800"/></svg>
<div class="t b" style="left:156px;top:1322px">Debug</div>
<svg style="left:238px;top:1329px" width="15" height="14" viewBox="0 0 15 14"><path d="M0 1h3M5 1h10M0 7h3M5 7h10M0 13h3M5 13h10" stroke="#6e6e6e" stroke-width="2"/></svg>
<div class="t b" style="left:261px;top:1322px">TODO</div>
<svg style="left:339px;top:1327px" width="16" height="19" viewBox="0 0 16 19"><ellipse cx="8" cy="9.500" rx="8" ry="9.500" fill="#6e6e6e"/><rect x="7" y="4" width="2.500" height="7" fill="#fff"/><rect x="7" y="13" width="2.500" height="2.500" fill="#fff"/></svg>
<div class="t b" style="left:364px;top:1322px">Problems</div>
<svg style="left:466px;top:1327px" width="16" height="18" viewBox="0 0 16 18"><rect width="16" height="18" fill="#6e6e6e"/><path d="M3 5l4 3-4 3M7 14h5" fill="none" stroke="#fff" stroke-width="1.300"/></svg>
<div class="t b" style="left:491px;top:1322px">Terminal</div>
<svg style="left:588px;top:1325px" width="24" height="24" viewBox="0 0 24 24"><path d="M3 9q6-3 12 0t6 8q-3 7-10 7-5-2-5-8z" fill="#1a1a1a"/><path d="M7 1l5 7M12 1l5 7M16 5l-8 3" stroke="#e02020" stroke-width="2.400"/></svg>
<div class="t b" style="left:620px;top:1322px">MyBatis Log</div>
<svg style="left:742px;top:1326px" width="20" height="21" viewBox="0 0 20 21"><circle cx="8" cy="8" r="7" fill="none" stroke="#6e6e6e" stroke-width="1.800"/><path d="M8 4v4l-2 2" fill="none" stroke="#6e6e6e" stroke-width="1.500"/><path d="M10 10l8 6-8 5z" fill="#8a8a8a"/></svg>
<div class="t b" style="left:770px;top:1322px">Profiler</div>
<svg style="left:855px;top:1326px" width="20" height="22" viewBox="0 0 20 22"><circle cx="10" cy="4" r="3.500" fill="#6e6e6e"/><circle cx="4" cy="17" r="4" fill="#6e6e6e"/><circle cx="16" cy="17" r="4" fill="#6e6e6e"/><path d="M10 4L4 17M10 4l6 13" stroke="#6e6e6e" stroke-width="1.800"/></svg>
<div class="t b" style="left:882px;top:1322px">Endpoints</div>
<svg style="left:988px;top:1328px" width="20" height="18" viewBox="0 0 26 24"><path d="M1 9L10 1l4 4-3 3 12 13-3 3L8 11l-3 2z" fill="#6e6e6e"/></svg>
<div class="t b" style="left:1014px;top:1322px">Build</div>
<svg style="left:1080px;top:1327px" width="19" height="19" viewBox="0 0 19 19"><path d="M18 0Q19 16 8 18 0 18 1 10 3 3 18 0z" fill="#8a8a8a"/></svg>
<div class="t b" style="left:1106px;top:1322px">Spring</div>
<svg style="left:1186px;top:1328px" width="18" height="17" viewBox="0 0 18 17"><path d="M9 0l9 17H0z" fill="#6e6e6e"/><rect x="8" y="6" width="2" height="6" fill="#fff"/><rect x="8" y="13" width="2" height="2" fill="#fff"/></svg>
<div class="t" style="left:1212px;top:1322px;font-size:18px">Auto-build</div>
<svg style="left:2236px;top:1326px" width="20" height="20" viewBox="0 0 20 20"><path d="M10 0a10 10 0 0 1 10 10v10H10a10 10 0 0 1 0-20z" fill="#59a869"/><text x="2.500" y="15" font-family="Liberation Sans" font-weight="bold" font-size="13" fill="#fff">9+</text></svg>
<div class="t" style="left:2263px;top:1322px;font-size:16.5px">Event Log</div>
<svg style="left:2371px;top:1326px" width="21" height="21" viewBox="0 0 21 21"><path d="M20 0Q10 2 6 7L0 11l4 1 3 6 3-6 6-4z" fill="#9a9a9a"/><text x="9" y="20" font-family="Liberation Sans" font-size="8.500" font-weight="bold" fill="#222">JR</text></svg>
<div class="t" style="left:2397px;top:1322px;font-size:16.3px">JRebel Console</div>

<!-- status bar -->
<div style="left:0;top:1349px;width:2560px;height:2px;background:#d3d3d3"></div>
<svg style="left:11px;top:1359px" width="19" height="16" viewBox="0 0 19 16"><path d="M4 0h14v12H4z" fill="none" stroke="#8a8a8a" stroke-width="1.300"/><path d="M0 4v12h14" fill="none" stroke="#8a8a8a" stroke-width="1.600"/></svg>
<div class="t" style="left:40px;top:1352px;font-size:19.45px">Key Promoter X: Command Go to Declaration or Usages missed 1,342 time(s) // 'Ctrl+B' // (Disable alert for this shortcut) (a minute ago)</div>
<div class="t" style="left:2295px;top:1352px;font-size:18.7px">40:18</div>
<div class="t" style="left:2362px;top:1352px;font-size:18.7px;color:#a8a8a8">LF</div>
<div class="t" style="left:2399px;top:1352px;font-size:18.7px;color:#a8a8a8">UTF-8</div>
<div class="t" style="left:2469px;top:1352px;font-size:18.7px">4 spaces</div>
</body></html>
